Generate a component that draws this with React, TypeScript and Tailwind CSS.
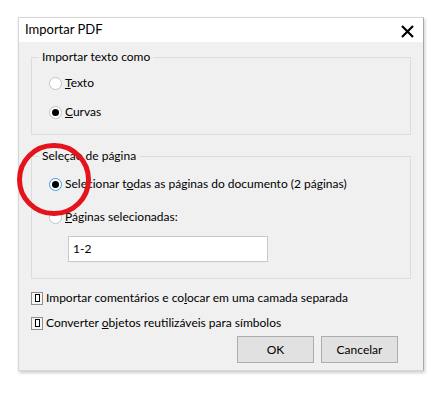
import React from 'react';

function Radio({ checked, focused }: { checked?: boolean; focused?: boolean }) {
  return (
    <span
      className={`flex h-[13px] w-[13px] shrink-0 items-center justify-center rounded-full border bg-white ${
        focused ? 'border-[#3c9ee8]' : 'border-[#c4c4c4]'
      }`}
    >
      {checked ? <span className="h-[7px] w-[7px] rounded-full bg-black" /> : null}
    </span>
  );
}

function Checkbox() {
  return (
    <span className="flex h-[13px] w-[12px] shrink-0 items-center justify-center border border-[#8f8f8f] bg-[#f4f4f4]">
      <span className="h-[8px] w-[5px] border border-black bg-white" />
    </span>
  );
}

function Group({ title, children, className }: { title: string; children: React.ReactNode; className?: string }) {
  return (
    <div className={`border border-[#dcdcdc] ${className ?? ''}`}>
      <span className="-mt-[9px] ml-[7px] block w-fit bg-[#f0f0f0] px-[3px] leading-[16px]">{title}</span>
      {children}
    </div>
  );
}

export default function App() {
  return (
    <div
      className="relative h-[394px] w-[444px] bg-white pl-[18px] pt-[17px] text-[12px] text-black"
      style={{ fontFamily: 'Lato, "Open Sans", sans-serif' }}
    >
      <div className="flex h-[354px] w-[406px] flex-col border border-[#d6d6d6] border-r-[#a8a8a8] shadow-[1px_2px_3px_rgba(0,0,0,0.2)]">
        <div className="flex h-[24px] items-center justify-between bg-white pl-[6px] pr-[9px]">
          <span className="text-[13px]">Importar PDF</span>
          <svg width="13" height="13" viewBox="0 0 13 13" className="mt-[2px]">
            <path d="M1 1 L12 12 M12 1 L1 12" stroke="black" strokeWidth="2.2" />
          </svg>
        </div>

        <div className="flex flex-1 flex-col bg-[#f0f0f0] px-[12px] pt-[15px]">
          <Group title="Importar texto como" className="h-[78px]">
            <div className="mt-[8px] flex h-[20px] items-center gap-[3px] pl-[17px]">
              <Radio />
              <span>
                <u>T</u>exto
              </span>
            </div>
            <div className="mt-[9px] flex h-[20px] items-center gap-[3px] pl-[17px]">
              <Radio checked />
              <span>
                <u>C</u>urvas
              </span>
            </div>
          </Group>

          <Group title="Seleção de página" className="mt-[21px] h-[123px]">
            <div className="mt-[10px] flex h-[20px] items-center gap-[3px] pl-[17px]">
              <Radio checked focused />
              <span>
                Selecionar t<u>o</u>das as páginas do documento (2 páginas)
              </span>
            </div>
            <div className="mt-[13px] flex h-[20px] items-center gap-[3px] pl-[17px]">
              <Radio />
              <span>
                <u>P</u>áginas selecionadas:
              </span>
            </div>
            <div className="ml-[36px] mt-[9px] flex h-[26px] w-[200px] items-center border border-[#c8c8c8] bg-white pl-[4px]">
              1-2
            </div>
          </Group>

          <div className="mt-[9px] flex h-[20px] items-center gap-[3px]">
            <Checkbox />
            <span>
              Importar comentários e co<u>l</u>ocar em uma camada separada
            </span>
          </div>
          <div className="mt-[5px] flex h-[20px] items-center gap-[3px]">
            <Checkbox />
            <span>
              Converter <u>o</u>bjetos reutilizáveis para símbolos
            </span>
          </div>

          <div className="mr-[13px] mt-[3px] flex justify-end gap-[7px]">
            <button className="h-[27px] w-[77px] border border-[#adadad] bg-[#e1e1e1]">OK</button>
            <button className="h-[27px] w-[77px] border border-[#adadad] bg-[#e1e1e1]">Cancelar</button>
          </div>
        </div>
      </div>

      <span className="absolute left-[17px] top-[143px] h-[73px] w-[74px] rounded-full border-[5px] border-[#e5141c]" />
    </div>
  );
}
